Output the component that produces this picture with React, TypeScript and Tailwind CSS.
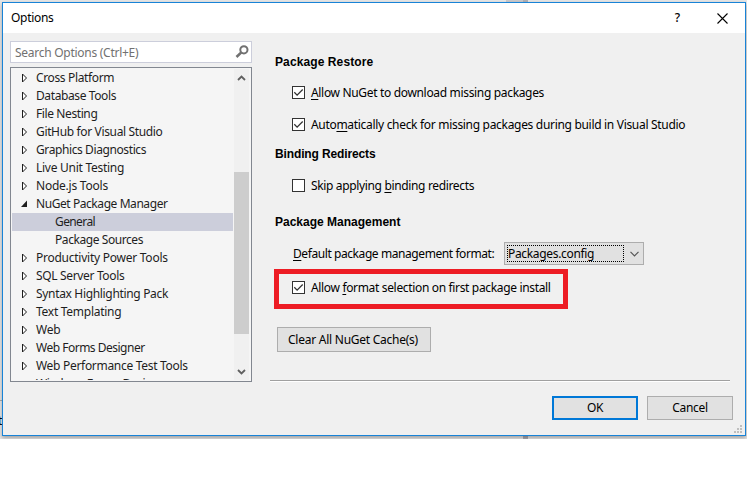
import type { ReactNode } from "react";

type Node = { label: string; track: string; open?: boolean; child?: boolean; selected?: boolean };

const nodes: Node[] = [
  { label: "Cross Platform", track: "tracking-[-0.36px]" },
  { label: "Database Tools", track: "tracking-[-0.39px]" },
  { label: "File Nesting", track: "tracking-[-0.4px]" },
  { label: "GitHub for Visual Studio", track: "tracking-[-0.35px]" },
  { label: "Graphics Diagnostics", track: "tracking-[-0.4px]" },
  { label: "Live Unit Testing", track: "tracking-[-0.27px]" },
  { label: "Node.js Tools", track: "tracking-[-0.23px]" },
  { label: "NuGet Package Manager", track: "tracking-[-0.43px]", open: true },
  { label: "General", track: "tracking-[-0.6px]", child: true, selected: true },
  { label: "Package Sources", track: "tracking-[-0.43px]", child: true },
  { label: "Productivity Power Tools", track: "tracking-[-0.25px]" },
  { label: "SQL Server Tools", track: "tracking-[-0.34px]" },
  { label: "Syntax Highlighting Pack", track: "tracking-[-0.33px]" },
  { label: "Text Templating", track: "tracking-[-0.27px]" },
  { label: "Web", track: "tracking-[-0.2px]" },
  { label: "Web Forms Designer", track: "tracking-[-0.5px]" },
  { label: "Web Performance Test Tools", track: "tracking-[-0.3px]" },
  { label: "Windows Forms Designer", track: "tracking-[-0.45px]" },
];

function Arrow({ open }: { open?: boolean }) {
  return (
    <svg width="8" height="10" viewBox="0 0 8 10" className="shrink-0">
      {open ? <path d="M6 1.500V8H0z" fill="#1e1e1e" /> : <path d="M1.500 1v8l4-4z" fill="#fff" stroke="#1e1e1e" />}
    </svg>
  );
}

function TreeRow({ node }: { node: Node }) {
  return (
    <div className={`flex h-[18px] shrink-0 items-center ${node.child ? "pl-[43px]" : "pl-[9px]"} ${node.selected ? "bg-[#cccedb]" : ""}`}>
      {!node.child && (
        <span className="flex w-[15px]">
          <Arrow open={node.open} />
        </span>
      )}
      <span className={`whitespace-nowrap text-[#1e1e1e] ${node.track}`}>{node.label}</span>
    </div>
  );
}

function Check({ checked, children, className }: { checked?: boolean; children: ReactNode; className: string }) {
  return (
    <label className={`flex h-[13px] items-center gap-[6px] whitespace-nowrap ${className}`}>
      <span className="flex size-[13px] shrink-0 items-center justify-center border border-[#333] bg-white">
        {checked && (
          <svg width="11" height="11" viewBox="0 0 11 11" fill="none" stroke="#333" strokeWidth="1.3">
            <path d="M1.3 5.3l2.8 2.8 5.6-5.6" />
          </svg>
        )}
      </span>
      <span>{children}</span>
    </label>
  );
}

function Key({ children }: { children: ReactNode }) {
  return <span className="underline decoration-1 underline-offset-2">{children}</span>;
}

function Heading({ children, className }: { children: ReactNode; className: string }) {
  return <h2 className={`h-4 whitespace-nowrap font-['Liberation_Sans',sans-serif] text-[12px] leading-4 font-bold ${className}`}>{children}</h2>;
}

export default function App() {
  return (
    <div className="h-[494px] w-[747px] overflow-hidden bg-white font-['Noto_Sans',sans-serif] text-[12px] leading-[16px] text-black">
      <div className="relative h-[439px] overflow-hidden bg-[#e6e6e6] pt-[2px] pl-[2px]">
        <div className="absolute top-0 left-[506px] h-[2px] w-[17px] bg-[#c9c9cc]" />
        <div className="absolute top-0 left-[523px] h-[2px] w-[5px] bg-[#b0b0b5]" />
        <div className="absolute top-[436px] left-[523px] h-[3px] w-[5px] bg-[#a9a9b0]" />
        <div className="absolute top-[400px] left-0 h-px w-[2px] bg-[#aaa]" />
        <div className="absolute top-[413px] left-[-2px]">t</div>

        <div className="relative flex h-[434px] w-[744px] flex-col border border-[#1883d7] bg-[#f0f0f0] shadow-[0_2px_4px_rgba(0,0,0,0.3)]">
          <header className="flex h-[30px] shrink-0 items-center bg-white pl-[8px]">
            <span className="mr-auto tracking-[-0.3px]">Options</span>
            <span className="mr-[37px] font-medium">?</span>
            <svg width="11" height="11" viewBox="0 0 11 11" stroke="#000" strokeWidth="1.1" className="mr-[17px]">
              <path d="M.5.5l10 10M10.500.5l-10 10" />
            </svg>
          </header>

          <div className="flex">
            <aside className="w-[249px] pt-[8px] pl-[7px]">
              <div className="flex h-[22px] w-[242px] items-center border border-[#cccedb] bg-white pr-[2px] pl-[4px]">
                <span className="mr-auto pt-px tracking-[-0.27px] text-[#717171]">Search Options (Ctrl+E)</span>
                <svg width="14" height="14" viewBox="0 0 14 14" fill="none" stroke="#717171">
                  <circle cx="8.900" cy="4.800" r="3.600" strokeWidth="2" />
                  <path d="M6.300 7.400L1.500 12" strokeWidth="2.600" />
                </svg>
              </div>
              <div className="mt-[4px] flex h-[315px] w-[242px] border border-[#828790] bg-[#f5f5f5] p-px">
                <div className="flex w-[221px] flex-col overflow-hidden">
                  {nodes.map((n) => (
                    <TreeRow key={n.label} node={n} />
                  ))}
                </div>
                <div className="ml-px flex w-[15px] flex-col items-center bg-[#f0f0f0] pt-[6px] pb-[5px]">
                  <svg width="9" height="6" viewBox="0 0 9 6" fill="none" stroke="#606060" strokeWidth="1.800">
                    <path d="M1 5l3.500-3.500L8 5" />
                  </svg>
                  <div className="mt-[91px] h-[162px] w-full bg-[#cdcdcd]" />
                  <svg width="9" height="6" viewBox="0 0 9 6" fill="none" stroke="#606060" strokeWidth="1.800" className="mt-auto">
                    <path d="M1 1l3.500 3.500L8 1" />
                  </svg>
                </div>
              </div>
            </aside>

            <main className="flex flex-1 flex-col pl-[18px]">
              <Heading className="ml-[5px] mt-[21px] tracking-[0.1px]">Package Restore</Heading>
              <Check checked className="mt-[16px] ml-[22px] tracking-[-0.33px]"><Key>A</Key>llow NuGet to download missing packages</Check>
              <Check checked className="mt-[19px] ml-[22px] tracking-[-0.31px]">Auto<Key>m</Key>atically check for missing packages during build in Visual Studio</Check>
              <Heading className="mt-[15px] ml-[5px] tracking-[-0.13px]">Binding Redirects</Heading>
              <Check className="mt-[17px] ml-[22px] tracking-[-0.35px]">Skip applying <Key>b</Key>inding redirects</Check>
              <Heading className="mt-[22px] ml-[5px] tracking-[0px]">Package Management</Heading>
              <div className="mt-[12px] ml-[23px] flex h-[23px] items-center">
                <span className="w-[211px] tracking-[-0.42px] whitespace-nowrap"><Key>D</Key>efault package management format:</span>
                <div className="flex h-[23px] w-[140px] items-center border border-[#adadad] bg-[#e1e1e1] pl-[2px]">
                  <span className="flex h-[17px] w-[117px] items-center border border-dotted border-black tracking-[-0.33px]">Packages.config</span>
                  <svg width="9" height="6" viewBox="0 0 9 6" fill="none" stroke="#555" strokeWidth="1.200" className="ml-[6px]">
                    <path d="M.5.800l4 4 4-4" />
                  </svg>
                </div>
              </div>
              <div className="mt-[4px] ml-[4px] flex h-[40px] w-[294px] items-center border-5 border-[#ed1c24] pb-[3px] pl-[13px]">
                <Check checked className="tracking-[-0.34px]">Allow <Key>f</Key>ormat selection on first package install</Check>
              </div>
              <button className="mt-[18px] ml-[7px] flex h-[25px] w-[154px] items-center justify-center border border-[#adadad] bg-[#e1e1e1] pr-[2px] tracking-[-0.25px] whitespace-nowrap">Clear All NuGet Cache(s)</button>
              <div className="mt-[28px] h-[2px] w-[460px] border-b border-white bg-[#a0a0a0]" />
            </main>
          </div>

          <footer className="mt-[14px] flex gap-[9px] pl-[549px]">
            <button className="flex h-[24px] w-[86px] items-center justify-center border-2 border-[#0078d7] bg-[#e1e1e1] tracking-[-0.4px]">OK</button>
            <button className="flex h-[24px] w-[86px] items-center justify-center border border-[#adadad] bg-[#e1e1e1] tracking-[-0.3px]">Cancel</button>
          </footer>
          <svg width="8" height="8" viewBox="0 0 8 8" fill="#bfbfbf" className="absolute right-[3px] bottom-[2px]">
            <path d="M6 0h2v2H6zM3 3h2v2H3zM6 3h2v2H6zM0 6h2v2H0zM3 6h2v2H3zM6 6h2v2H6z" />
          </svg>
        </div>
      </div>
    </div>
  );
}
